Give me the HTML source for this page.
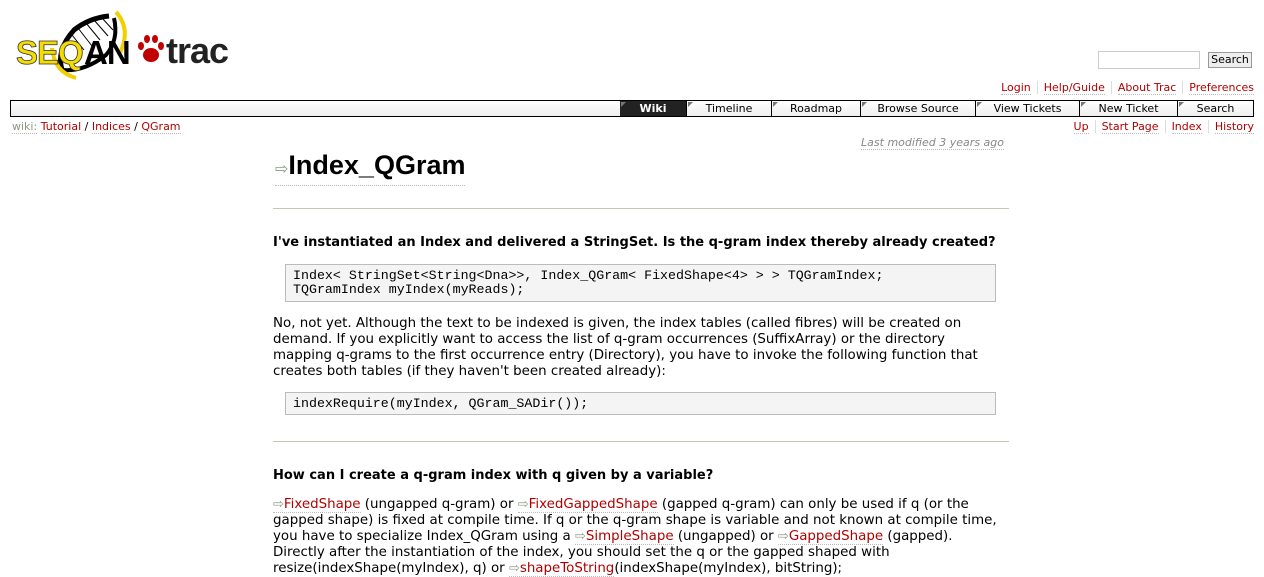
<!DOCTYPE html>
<html><head><meta charset="utf-8"><style>
*{margin:0;padding:0;box-sizing:border-box}
body{width:1264px;height:569px;overflow:hidden;background:#fff;font-family:"DejaVu Sans","Liberation Sans",sans-serif;color:#000;position:relative}
.a{position:absolute;white-space:nowrap}
a{color:#b00000;text-decoration:none;border-bottom:1px dotted #bbb}
.meta{font-size:11px;line-height:13px}
.meta span{border-right:1px solid #ddd;padding:0 6px;display:inline-block}
.meta span:last-child{border-right:none;padding-right:0}
#nav{left:10px;top:100px;width:1244px;height:17px;border:1px solid #000;background:linear-gradient(#fff,#eee)}
#nav div{position:absolute;top:0;height:15px;font-size:11px;line-height:15px;text-align:center;border-left:1px solid #000}
#nav div:before{content:"";position:absolute;left:1px;top:1px;border-top:5px solid #777;border-right:5px solid transparent}
p.l{font-size:13.4px;line-height:16px}
.h3{font-size:13px;font-weight:bold}
pre{position:absolute;background:#f4f4f4;border:1px solid #bbb;font-family:"Liberation Mono","DejaVu Sans Mono",monospace;font-size:13.3px;line-height:14px;padding:4px 7px}
.w{color:#8a9a80;font-size:11px}
.i{color:#8a9a80;font-size:13px}
hr{position:absolute;border:none;border-top:1px solid #c6c6b4;height:0}
</style></head><body>
<svg class="a" style="left:14px;top:10px" width="215" height="72" viewBox="0 0 215 72">
<path d="M48 60 Q42 40 60 20 Q75 8 95 6" fill="none" stroke="#000" stroke-width="5"/>
<path d="M48 60 Q70 62 92 45 Q105 30 100 8" fill="none" stroke="#000" stroke-width="4"/>
<g stroke="#000" stroke-width="1"><line x1="58" y1="25" x2="70" y2="40"/><line x1="64" y1="18" x2="78" y2="36"/><line x1="72" y1="13" x2="86" y2="30"/><line x1="80" y1="10" x2="94" y2="26"/><line x1="88" y1="8" x2="99" y2="20"/></g>
<path d="M102 2 Q118 20 105 45" fill="none" stroke="#f0d000" stroke-width="4"/>
<path d="M38 38 Q40 62 62 68" fill="none" stroke="#f0d000" stroke-width="4"/>
<text x="2" y="54" font-family="Liberation Sans" font-weight="bold" font-size="33" fill="#f5dc00" stroke="#333" stroke-width="0.8" letter-spacing="-1">SEQ</text>
<text x="70" y="54" font-family="Liberation Sans" font-weight="bold" font-size="33" fill="#000" letter-spacing="-1">AN</text>
<g fill="#c00000"><ellipse cx="137" cy="45" rx="8" ry="7"/><ellipse cx="127" cy="36" rx="3" ry="4"/><ellipse cx="133" cy="29" rx="3" ry="4"/><ellipse cx="141" cy="29" rx="3" ry="4"/><ellipse cx="147" cy="36" rx="3" ry="4"/></g>
<text x="152" y="53" font-family="Liberation Sans" font-weight="bold" font-size="36" fill="#222" letter-spacing="-1">trac</text>
</svg>
<div class="a" style="left:1098px;top:51px;width:102px;height:18px;border:1px solid #ccc"></div>
<div class="a" style="left:1208px;top:52px;width:44px;height:16px;border:1px solid #999;background:#eee;font-size:11px;line-height:14px;text-align:center">Search</div>
<div class="a meta" style="right:10px;top:81px"><span><a>Login</a></span><span><a>Help/Guide</a></span><span><a>About Trac</a></span><span><a>Preferences</a></span></div>
<div id="nav" class="a">
<div style="left:609px;width:66px;background:#222;color:#fff;font-weight:bold;border-left:none">Wiki</div>
<div style="left:675px;width:85px">Timeline</div>
<div style="left:760px;width:89px">Roadmap</div>
<div style="left:849px;width:115px">Browse Source</div>
<div style="left:964px;width:104px">View Tickets</div>
<div style="left:1068px;width:98px">New Ticket</div>
<div style="left:1166px;width:76px">Search</div>
</div>
<div class="a meta" style="left:12px;top:120px"><span class="w" style="border-bottom:1px dotted #bbb;border-right:none;padding:0">wiki:</span> <a>Tutorial</a> / <a>Indices</a> / <a>QGram</a></div>
<div class="a meta" style="right:10px;top:120px"><span><a>Up</a></span><span><a>Start Page</a></span><span><a>Index</a></span><span><a>History</a></span></div>
<div class="a" style="right:260px;top:136px;font-size:11px;font-style:italic;color:#888"><span style="border-bottom:1px dotted #bbb">Last modified 3 years ago</span></div>
<div class="a" style="left:275px;top:150px;font-family:'Liberation Sans',sans-serif;font-size:27px;font-weight:bold;border-bottom:1px dotted #bbb;line-height:31px"><span style="font-size:16px;color:#8a9a80;font-weight:normal">⇨</span>Index_QGram</div>
<hr style="left:273px;top:208px;width:736px">
<div class="a h3" style="left:273px;top:235px">I've instantiated an Index and delivered a StringSet. Is the q-gram index thereby already created?</div>
<pre style="left:285px;top:264px;width:711px;height:38px">Index&lt; StringSet&lt;String&lt;Dna&gt;&gt;, Index_QGram&lt; FixedShape&lt;4&gt; &gt; &gt; TQGramIndex;
TQGramIndex myIndex(myReads);</pre>
<p class="a l" style="left:273px;top:316px">No, not yet. Although the text to be indexed is given, the index tables (called fibres) will be created on<br>demand. If you explicitly want to access the list of q-gram occurrences (SuffixArray) or the directory<br>mapping q-grams to the first occurrence entry (Directory), you have to invoke the following function that<br>creates both tables (if they haven't been created already):</p>
<pre style="left:285px;top:392px;width:711px;height:23px">indexRequire(myIndex, QGram_SADir());</pre>
<hr style="left:273px;top:441px;width:736px">
<div class="a h3" style="left:273px;top:468px">How can I create a q-gram index with q given by a variable?</div>
<p class="a l" style="left:273px;top:497px"><a><span class="i">⇨</span>FixedShape</a> (ungapped q-gram) or <a><span class="i">⇨</span>FixedGappedShape</a> (gapped q-gram) can only be used if q (or the<br>gapped shape) is fixed at compile time. If q or the q-gram shape is variable and not known at compile time,<br>you have to specialize Index_QGram using a <a><span class="i">⇨</span>SimpleShape</a> (ungapped) or <a><span class="i">⇨</span>GappedShape</a> (gapped).<br>Directly after the instantiation of the index, you should set the q or the gapped shaped with<br>resize(indexShape(myIndex), q) or <a><span class="i">⇨</span>shapeToString</a>(indexShape(myIndex), bitString);</p>
</body></html>
